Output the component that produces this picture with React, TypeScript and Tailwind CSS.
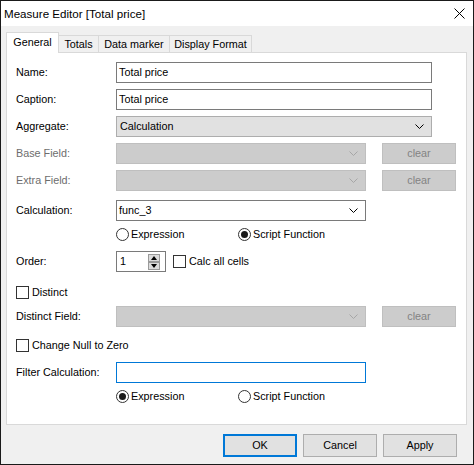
import React from "react";

const Chevron = ({ disabled }: { disabled?: boolean }) => (
  <svg width="9" height="6" viewBox="0 0 9 6" className="shrink-0">
    <path d="M0.5 0.5 L4.5 4.5 L8.5 0.5" fill="none" stroke={disabled ? "#a6a6a6" : "#000"} strokeWidth="1" />
  </svg>
);

const Radio = ({ checked, label }: { checked?: boolean; label: string }) => (
  <div className="flex items-center">
    <div className="w-[13px] h-[13px] rounded-full border border-[#333333] bg-white flex items-center justify-center">
      {checked && <div className="w-[7px] h-[7px] rounded-full bg-[#1a1a1a]" />}
    </div>
    <span className="ml-[2px]">{label}</span>
  </div>
);

const Check = ({ label }: { label: string }) => (
  <div className="flex items-center">
    <div className="w-[13px] h-[13px] border border-[#333333] bg-white" />
    <span className="ml-[3px]">{label}</span>
  </div>
);

const Label = ({ children, disabled }: { children: React.ReactNode; disabled?: boolean }) => (
  <div className={"w-[100px] shrink-0 " + (disabled ? "text-[#6d6d6d]" : "text-black")}>{children}</div>
);

const ClearBtn = () => (
  <div className="ml-[16px] w-[74px] h-[21px] border border-[#bfbfbf] bg-[#cccccc] text-[#838383] flex items-center justify-center">
    clear
  </div>
);

const DisabledSelect = () => (
  <div className="w-[250px] h-[21px] border border-[#bfbfbf] bg-[#cccccc] flex items-center justify-end pr-[7px]">
    <Chevron disabled />
  </div>
);

export default function App() {
  return (
    <div
      className="w-[474px] h-[465px] border border-[#1a1a1a] bg-[#f0f0f0] flex flex-col text-[10.8px] text-black overflow-hidden"
      style={{ fontFamily: '"Liberation Sans", Arial, sans-serif' }}
    >
      {/* Title bar */}
      <div className="h-[25px] bg-white flex items-center justify-between pl-[3px] pr-[8px] shrink-0">
        <span className="text-[11.6px]">Measure Editor [Total price]</span>
        <svg width="11" height="11" viewBox="0 0 11 11">
          <path d="M0.5 0.5 L10.5 10.5 M10.5 0.5 L0.5 10.5" stroke="#000" strokeWidth="1" />
        </svg>
      </div>

      {/* Body */}
      <div className="pl-[5px] pr-[6px] pt-[6px] flex flex-col">
        {/* Tabs */}
        <div className="h-[20px] flex items-end">
          <div className="relative z-10 -mb-px w-[53px] h-[21px] bg-white border-t border-l border-r border-[#d9d9d9] flex items-center justify-center pb-[1px]">
            General
          </div>
          <div className="w-[40px] h-[17px] border-t border-r border-[#d9d9d9] flex items-center justify-center">
            Totals
          </div>
          <div className="w-[71px] h-[17px] border-t border-r border-[#d9d9d9] flex items-center justify-center">
            Data marker
          </div>
          <div className="w-[82px] h-[17px] border-t border-r border-[#d9d9d9] flex items-center justify-center">
            Display Format
          </div>
        </div>

        {/* Panel */}
        <div className="w-[461px] h-[373px] bg-white border border-[#d9d9d9] pl-[9px] flex flex-col">
          <div className="mt-[9px] h-[21px] flex items-center">
            <Label>Name:</Label>
            <div className="w-[316px] h-[21px] border border-[#7a7a7a] flex items-center pl-[2px]">Total price</div>
          </div>
          <div className="mt-[6px] h-[21px] flex items-center">
            <Label>Caption:</Label>
            <div className="w-[316px] h-[21px] border border-[#7a7a7a] flex items-center pl-[2px]">Total price</div>
          </div>
          <div className="mt-[6px] h-[21px] flex items-center">
            <Label>Aggregate:</Label>
            <div className="w-[316px] h-[21px] border border-[#adadad] bg-[#e1e1e1] flex items-center justify-between pl-[3px] pr-[7px]">
              <span>Calculation</span>
              <Chevron />
            </div>
          </div>
          <div className="mt-[6px] h-[21px] flex items-center">
            <Label disabled>Base Field:</Label>
            <DisabledSelect />
            <ClearBtn />
          </div>
          <div className="mt-[6px] h-[21px] flex items-center">
            <Label disabled>Extra Field:</Label>
            <DisabledSelect />
            <ClearBtn />
          </div>
          <div className="mt-[9px] h-[21px] flex items-center">
            <Label>Calculation:</Label>
            <div className="w-[250px] h-[21px] border border-[#7a7a7a] flex items-center justify-between pl-[2px] pr-[7px]">
              <span>func_3</span>
              <Chevron />
            </div>
          </div>
          <div className="mt-[5px] h-[16px] flex items-center">
            <div className="w-[100px] shrink-0" />
            <div className="w-[122px] shrink-0">
              <Radio label="Expression" />
            </div>
            <Radio checked label="Script Function" />
          </div>
          <div className="mt-[9px] h-[21px] flex items-center">
            <Label>Order:</Label>
            <div className="w-[50px] h-[21px] border border-[#7a7a7a] flex items-center justify-between pl-[3px] pr-[5px]">
              <span>1</span>
              <div className="flex flex-col gap-[0px]">
                <div className="w-[12px] h-[8px] bg-[#dcdcdc] border border-[#9a9a9a] flex items-center justify-center">
                  <svg width="6" height="4" viewBox="0 0 6 4">
                    <path d="M3 0 L6 4 L0 4 Z" fill="#000" />
                  </svg>
                </div>
                <div className="w-[12px] h-[8px] bg-[#dcdcdc] border border-[#9a9a9a] flex items-center justify-center">
                  <svg width="6" height="4" viewBox="0 0 6 4">
                    <path d="M0 0 L6 0 L3 4 Z" fill="#000" />
                  </svg>
                </div>
              </div>
            </div>
            <div className="ml-[7px]">
              <Check label="Calc all cells" />
            </div>
          </div>
          <div className="mt-[12px] h-[16px] flex items-center">
            <Check label="Distinct" />
          </div>
          <div className="mt-[6px] h-[21px] flex items-center">
            <Label>Distinct Field:</Label>
            <DisabledSelect />
            <ClearBtn />
          </div>
          <div className="mt-[10px] h-[16px] flex items-center">
            <Check label="Change Null to Zero" />
          </div>
          <div className="mt-[9px] h-[21px] flex items-center">
            <Label>Filter Calculation:</Label>
            <div className="w-[250px] h-[21px] border border-[#0078d7]" />
          </div>
          <div className="mt-[5px] h-[16px] flex items-center">
            <div className="w-[100px] shrink-0" />
            <div className="w-[122px] shrink-0">
              <Radio checked label="Expression" />
            </div>
            <Radio label="Script Function" />
          </div>
        </div>

        {/* Buttons */}
        <div className="mt-[9px] flex justify-end gap-[6px] pr-[10px]">
          <div className="w-[74px] h-[23px] border-2 border-[#0078d7] bg-[#e1e1e1] flex items-center justify-center">OK</div>
          <div className="w-[74px] h-[23px] border border-[#adadad] bg-[#e1e1e1] flex items-center justify-center">Cancel</div>
          <div className="w-[74px] h-[23px] border border-[#adadad] bg-[#e1e1e1] flex items-center justify-center">Apply</div>
        </div>
      </div>
    </div>
  );
}
